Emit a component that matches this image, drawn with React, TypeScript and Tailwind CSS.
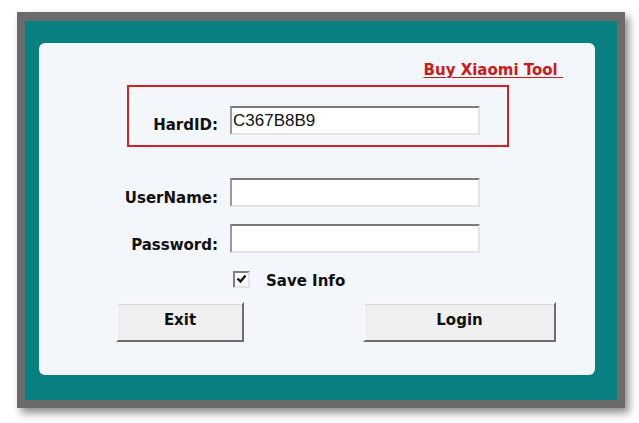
export default function App() {
  const label = "font-['DejaVu_Sans',sans-serif] font-bold text-[15px] leading-[18px] text-[#111] text-right";
  const field =
    "h-[29px] w-[250px] bg-white border-2 border-t-[#7a7a7a] border-l-[#9a9a9a] border-r-[#e4e4e4] border-b-[#e4e4e4] px-[1px] font-['Liberation_Sans',sans-serif] text-[17px] text-[#111] outline-none";
  const btn =
    "h-[40px] bg-[#efefef] border-2 border-t-[#f8f8f8] border-l-[#f8f8f8] border-r-[#6e6e6e] border-b-[#6e6e6e] shadow-[inset_0_1px_0_#d8d8d8] font-['DejaVu_Sans',sans-serif] font-bold text-[15px] text-[#111] pb-[4px]";

  return (
    <div className="w-[639px] h-[423px] bg-white overflow-hidden">
      <div className="ml-[17px] mt-[12px] w-[608px] h-[396px] bg-[#6b6b6b] pt-[9px] px-[8px] pb-[8px] shadow-[4px_5px_8px_rgba(0,0,0,0.45)]">
        <div className="h-full bg-[#087f80] pl-[14px] pt-[22px] pr-[22px] pb-[25px]">
          <div className="h-full bg-[#f3f6fb] rounded-[6px] flex flex-col">
            {/* link */}
            <div className="pt-[18px] pr-[32px] flex justify-end">
              <a className="font-['DejaVu_Sans',sans-serif] font-bold text-[15px] leading-[18px] text-[#d01818] underline underline-offset-2 cursor-pointer">
                Buy Xiaomi Tool{"\u00a0"}
              </a>
            </div>

            {/* hard id box */}
            <div className="mt-[6px] ml-[88px] w-[382px] h-[62px] border-2 border-[#d42222] flex items-start gap-[12px] pt-[19px]">
              <div className={`${label} w-[89px] mt-[10px]`}>HardID:</div>
              <input readOnly value="C367B8B9" className={`${field} h-[28px]`} />
            </div>

            {/* user / pass */}
            <div className="mt-[31px] flex items-start gap-[12px]">
              <div className={`${label} w-[179px] mt-[11px]`}>UserName:</div>
              <input className={field} />
            </div>
            <div className="mt-[17px] flex items-start gap-[12px]">
              <div className={`${label} w-[179px] mt-[12px]`}>Password:</div>
              <input type="password" className={field} />
            </div>

            {/* save info */}
            <div className="mt-[16px] pl-[194px] h-[18px] flex items-center gap-[16px]">
              <div className="w-[17px] h-[17px] bg-white border-2 border-t-[#808080] border-l-[#808080] border-r-[#e4e4e4] border-b-[#e4e4e4] flex items-center justify-center">
                <svg width="11" height="10" viewBox="0 0 11 10">
                  <path d="M1.5 4.5 L4.5 7.5 L9.5 1.5" stroke="#111" strokeWidth="2.4" fill="none" />
                </svg>
              </div>
              <span className="font-['DejaVu_Sans',sans-serif] font-bold text-[15px] leading-[18px] text-[#111] mt-[3px]">
                Save Info
              </span>
            </div>

            {/* buttons */}
            <div className="mt-[14px] pl-[77px] flex gap-[119px]">
              <button className={`${btn} w-[128px]`}>Exit</button>
              <button className={`${btn} w-[193px]`}>Login</button>
            </div>
          </div>
        </div>
      </div>
    </div>
  );
}
